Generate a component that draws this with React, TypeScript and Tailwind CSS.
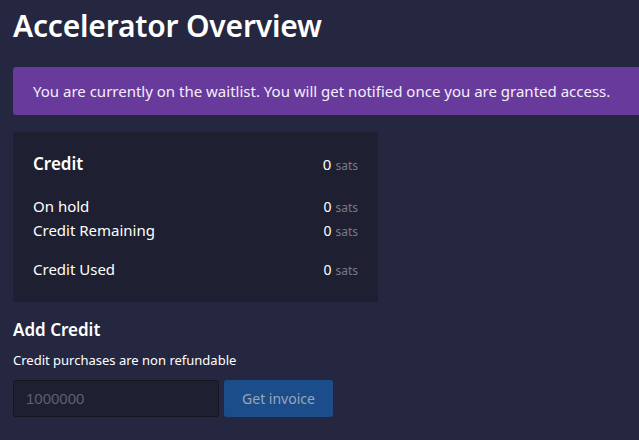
export default function App() {
  const rows = [
    { label: 'On hold', value: '0' },
    { label: 'Credit Remaining', value: '0' },
  ];

  return (
    <div
      className="min-h-[440px] w-full overflow-hidden bg-[#252740] text-white"
      style={{ fontFamily: '"Noto Sans", "Open Sans", sans-serif' }}
    >
      <div className="pl-[13px]">
        <h1 className="pt-[4px] text-[30px] font-semibold leading-[44px] tracking-[-0.2px]">Accelerator Overview</h1>

        {/* waitlist notice */}
        <div className="mt-[19px] flex h-[48px] items-center rounded-l-[3px] bg-[#683a9c] pl-[20px] text-[15px] text-[#f3eef9]">
          You are currently on the waitlist. You will get notified once you are granted access.
        </div>

        {/* credit card */}
        <div className="mt-[17px] w-[365px] bg-[#1e1f31] px-[20px] pt-[19px] pb-[21px]">
          <div className="flex items-center justify-between">
            <span className="text-[17px] font-semibold">Credit</span>
            <Amount value="0" big />
          </div>
          <div className="mt-[19px] flex flex-col gap-[2px]">
            {rows.map((r) => (
              <div key={r.label} className="flex h-[22px] items-center justify-between">
                <span className="text-[15px]">{r.label}</span>
                <Amount value={r.value} />
              </div>
            ))}
          </div>
          <div className="mt-[17px] flex h-[22px] items-center justify-between">
            <span className="text-[15px]">Credit Used</span>
            <Amount value="0" />
          </div>
        </div>

        {/* add credit */}
        <h2 className="mt-[16px] text-[17px] font-semibold leading-[24px]">Add Credit</h2>
        <p className="mt-[9px] text-[13px] leading-[18px]">Credit purchases are non refundable</p>
        <div className="mt-[11px] flex gap-[5px]">
          <input
            className="h-[37px] w-[206px] rounded-[3px] border border-[#15151f] bg-[#1e1f31] px-[12px] text-[15px] text-white outline-none placeholder:text-[#5d6070]"
            style={{ fontFamily: '"Liberation Sans", Arial, sans-serif' }}
            placeholder="1000000"
          />
          <button className="h-[37px] w-[109px] rounded-[3px] bg-[#1a4d8a] text-[14px] text-[#9aa6b8]">
            Get invoice
          </button>
        </div>
      </div>
    </div>
  );
}

function Amount({ value, big }: { value: string; big?: boolean }) {
  return (
    <span className="flex items-baseline gap-[4px]">
      <span className={big ? 'text-[15px]' : 'text-[14px]'}>{value}</span>
      <span className="text-[12px] text-[#777a88]">sats</span>
    </span>
  );
}
